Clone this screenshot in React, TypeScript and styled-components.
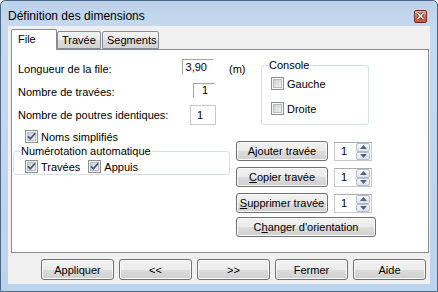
import React, { useId } from 'react';
import styled, { createGlobalStyle } from 'styled-components';

const GlobalStyle = createGlobalStyle`
  html, body {
    margin: 0;
    padding: 0;
    background: #ffffff;
  }
  body {
    font-family: "Liberation Sans", Arial, sans-serif;
    font-size: 11px;
    color: #000;
  }
  * { box-sizing: border-box; }
`;

const Window = styled.div`
  width: 438px;
  height: 292px;
  border: 1px solid #4b6886;
  border-radius: 5px 5px 0 0;
  background: linear-gradient(#bcd2ea, #c6d9ee 26px, #bcd3eb);
  padding: 0 7px 7px 7px;
  display: flex;
  flex-direction: column;
`;

const TitleBar = styled.div`
  height: 25px;
  padding-top: 5px;
  display: flex;
  align-items: center;
  justify-content: space-between;
`;

const Title = styled.span`
  font-size: 12px;
  color: #000;
`;

const CloseButton = styled.div`
  width: 13px;
  height: 13px;
  margin-right: 3px;
  border: 1px solid #6d2a20;
  border-radius: 2px;
  background: linear-gradient(#eab4a6, #d4705b 55%, #c9553f);
  display: flex;
  align-items: center;
  justify-content: center;
`;

const Client = styled.div`
  flex: 1;
  background: #f0f0f0;
  padding: 3px 2px 0 3px;
  display: flex;
  flex-direction: column;
`;

const TabStrip = styled.div`
  height: 20px;
  display: flex;
  align-items: flex-end;
`;

const Tab = styled.div<{ $active?: boolean; $w: number }>`
  position: relative;
  z-index: ${p => (p.$active ? 1 : 0)};
  width: ${p => p.$w}px;
  height: ${p => (p.$active ? 21 : 18)}px;
  margin-bottom: ${p => (p.$active ? -1 : 0)}px;
  margin-right: ${p => (p.$active ? 0 : 1)}px;
  border: 1px solid #898c95;
  border-bottom: ${p => (p.$active ? 'none' : '1px solid #898c95')};
  border-radius: 2px 2px 0 0;
  background: ${p =>
    p.$active ? '#ffffff' : 'linear-gradient(#f3f3f3, #ebebeb 50%, #dddddd 50%, #d3d3d3)'};
  padding-left: ${p => (p.$active ? 6 : 4)}px;
  padding-top: ${p => (p.$active ? 3 : 2)}px;
  line-height: 13px;
  font-size: 11px;
`;

const Panel = styled.div`
  height: 204px;
  width: 418px;
  border: 1px solid #898c95;
  background: #ffffff;
  padding: 7px 0 0 1px;
  display: flex;
  flex-direction: column;
`;

const TopSection = styled.div`
  display: flex;
  align-items: flex-start;
`;

const FormCol = styled.div`
  width: 233px;
  padding-left: 5px;
  display: flex;
  flex-direction: column;
`;

const FormRow = styled.div`
  height: 23px;
  display: flex;
  align-items: center;
`;

const Label = styled.span`
  flex: 1;
  white-space: nowrap;
`;

const Field = styled.div<{ $w: number; $h: number; $mt: number; $mr: number; $sunken?: boolean }>`
  align-self: flex-start;
  width: ${p => p.$w}px;
  height: ${p => p.$h}px;
  margin-top: ${p => p.$mt}px;
  margin-right: ${p => p.$mr}px;
  background: #fff;
  border: 1px solid;
  border-color: ${p => (p.$sunken ? '#a3a3a3 #ffffff #ffffff #a3a3a3' : '#c8c8c8')};
  line-height: ${p => p.$h - 2}px;
  text-align: ${p => (p.$sunken ? 'right' : 'left')};
  padding: ${p => (p.$sunken ? '0 6px 0 0' : '0 0 0 6px')};
`;

const Unit = styled.span`
  width: 30px;
  padding-left: 13px;
`;

const Group = styled.fieldset<{ $w: number }>`
  width: ${p => p.$w}px;
  margin: 1px 0 0 0;
  padding: 0 0 0 6px;
  border: 1px solid #d5dfe5;
  border-radius: 3px;
  min-width: 0;
`;

const Legend = styled.legend`
  padding: 0 1px;
  line-height: 14px;
  font-size: 11px;
`;

const ConsoleGroup = styled(Group)`
  margin-left: 15px;
  padding-top: 5px;
  padding-bottom: 9px;
  display: flex;
  flex-direction: column;
  gap: 12px;
`;

const CheckRow = styled.label<{ $ml?: number; $mt?: number }>`
  display: flex;
  align-items: center;
  gap: 3px;
  height: 13px;
  margin-left: ${p => p.$ml ?? 0}px;
  margin-top: ${p => p.$mt ?? 0}px;
  white-space: nowrap;
`;

const CheckLine = styled.div`
  display: flex;
  gap: 8px;
  padding: 2px 0 1px 5px;
`;

const BottomSection = styled.div`
  display: flex;
  align-items: flex-start;
  gap: 6px;
`;

const LeftCol = styled.div`
  width: 217px;
  display: flex;
  flex-direction: column;
`;

const RightCol = styled.div`
  padding-top: 15px;
  display: flex;
  flex-direction: column;
`;

const ActionRow = styled.div<{ $mt: number }>`
  display: flex;
  align-items: flex-start;
  gap: 6px;
  margin-top: ${p => p.$mt}px;
`;

const PushButton = styled.button<{ $w: number; $h?: number }>`
  width: ${p => p.$w}px;
  height: ${p => p.$h ?? 20}px;
  padding: 0;
  border: 1px solid #707070;
  border-radius: 3px;
  background: linear-gradient(#f2f2f2, #ebebeb 50%, #dddddd 50%, #cfcfcf);
  box-shadow: inset 0 0 0 1px #fbfbfb;
  font-family: "Liberation Sans", Arial, sans-serif;
  font-size: 11px;
  color: #000;
  text-align: center;

  u { text-decoration: underline; text-underline-offset: 1px; }
`;

const Spin = styled.div`
  width: 38px;
  height: 19px;
  margin-top: 1px;
  border: 1px solid #c5c8cd;
  border-top-color: #abadb3;
  background: #fff;
  display: flex;
`;

const SpinValue = styled.span`
  flex: 1;
  padding-left: 6px;
  line-height: 17px;
`;

const SpinButtons = styled.div`
  width: 15px;
  display: flex;
  flex-direction: column;
  padding: 0 1px 0 0;
`;

const SpinArrow = styled.div`
  flex: 1;
  border: 1px solid #b6bdc9;
  border-radius: 2px;
  background: linear-gradient(#f5f7fa, #dde4ee);
  display: flex;
  align-items: center;
  justify-content: center;
`;

const ButtonBar = styled.div`
  display: flex;
  justify-content: flex-end;
  gap: 5px;
  margin-top: 6px;
  padding-right: 2px;
`;

const CheckBox: React.FC<{ checked?: boolean }> = ({ checked }) => {
  const id = useId().replace(/:/g, '');
  return (
    <svg width="13" height="13" viewBox="0 0 13 13">
      <defs>
        <linearGradient id={`cb${id}`} x1="0" y1="0" x2="1" y2="1">
          <stop offset="0" stopColor="#c9ccd1" />
          <stop offset="1" stopColor="#f4f4f4" />
        </linearGradient>
      </defs>
      <rect x="0.5" y="0.5" width="12" height="12" fill="#f6f6f6" stroke="#8e8f8f" />
      <rect x="2.5" y="2.5" width="8" height="8" fill={`url(#cb${id})`} stroke="#b9bcc0" />
      {checked && (
        <path d="M3 6.3 L5.4 8.8 L10.2 3.2" fill="none" stroke="#3c5587" strokeWidth="1.7" />
      )}
    </svg>
  );
};

const Arrow: React.FC<{ up?: boolean }> = ({ up }) => (
  <svg width="7" height="4" viewBox="0 0 7 4">
    <path d={up ? 'M0 4 L3.5 0 L7 4 Z' : 'M0 0 L3.5 4 L7 0 Z'} fill="#4f6488" />
  </svg>
);

const SpinBox: React.FC<{ value: string }> = ({ value }) => (
  <Spin>
    <SpinValue>{value}</SpinValue>
    <SpinButtons>
      <SpinArrow><Arrow up /></SpinArrow>
      <SpinArrow><Arrow /></SpinArrow>
    </SpinButtons>
  </Spin>
);

const App: React.FC = () => {
  return (
    <>
      <GlobalStyle />
      <Window>
        <TitleBar>
          <Title>Définition des dimensions</Title>
          <CloseButton>
            <svg width="9" height="8" viewBox="0 0 9 8">
              <path d="M1.5 1 L7.5 7 M7.5 1 L1.5 7" stroke="#5a1d14" strokeWidth="3" />
              <path d="M1.5 1 L7.5 7 M7.5 1 L1.5 7" stroke="#ffffff" strokeWidth="1.6" />
            </svg>
          </CloseButton>
        </TitleBar>
        <Client>
          <TabStrip>
            <Tab $active $w={46}>File</Tab>
            <Tab $w={44}>Travée</Tab>
            <Tab $w={57}>Segments</Tab>
          </TabStrip>
          <Panel>
            <TopSection>
              <FormCol>
                <FormRow>
                  <Label>Longueur de la file:</Label>
                  <Field $sunken $w={32} $h={16} $mt={2} $mr={2}>3,90</Field>
                  <Unit>(m)</Unit>
                </FormRow>
                <FormRow>
                  <Label>Nombre de travées:</Label>
                  <Field $sunken $w={22} $h={15} $mt={3} $mr={1}>1</Field>
                  <Unit />
                </FormRow>
                <FormRow>
                  <Label>Nombre de poutres identiques:</Label>
                  <Field $w={26} $h={20} $mt={2} $mr={0}>1</Field>
                  <Unit />
                </FormRow>
              </FormCol>
              <ConsoleGroup $w={108}>
                <Legend>Console</Legend>
                <CheckRow $ml={3}><CheckBox />Gauche</CheckRow>
                <CheckRow $ml={3}><CheckBox />Droite</CheckRow>
              </ConsoleGroup>
            </TopSection>
            <BottomSection>
              <LeftCol>
                <CheckRow $ml={12} $mt={4}><CheckBox checked />Noms simplifiés</CheckRow>
                <Group $w={217}>
                  <Legend>Numérotation automatique</Legend>
                  <CheckLine>
                    <CheckRow><CheckBox checked />Travées</CheckRow>
                    <CheckRow><CheckBox checked />Appuis</CheckRow>
                  </CheckLine>
                </Group>
              </LeftCol>
              <RightCol>
                <ActionRow $mt={0}>
                  <PushButton $w={92}>Ajouter travée</PushButton>
                  <SpinBox value="1" />
                </ActionRow>
                <ActionRow $mt={6}>
                  <PushButton $w={92}><u>C</u>opier travée</PushButton>
                  <SpinBox value="1" />
                </ActionRow>
                <ActionRow $mt={6}>
                  <PushButton $w={92}><u>S</u>upprimer travée</PushButton>
                  <SpinBox value="1" />
                </ActionRow>
                <ActionRow $mt={4}>
                  <PushButton $w={140}>C<u>h</u>anger d'orientation</PushButton>
                </ActionRow>
              </RightCol>
            </BottomSection>
          </Panel>
          <ButtonBar>
            <PushButton $w={73} $h={21}>Appliquer</PushButton>
            <PushButton $w={73} $h={21}>&lt;&lt;</PushButton>
            <PushButton $w={73} $h={21}>&gt;&gt;</PushButton>
            <PushButton $w={73} $h={21}>Fermer</PushButton>
            <PushButton $w={73} $h={21}>Aide</PushButton>
          </ButtonBar>
        </Client>
      </Window>
    </>
  );
};

export default App;
